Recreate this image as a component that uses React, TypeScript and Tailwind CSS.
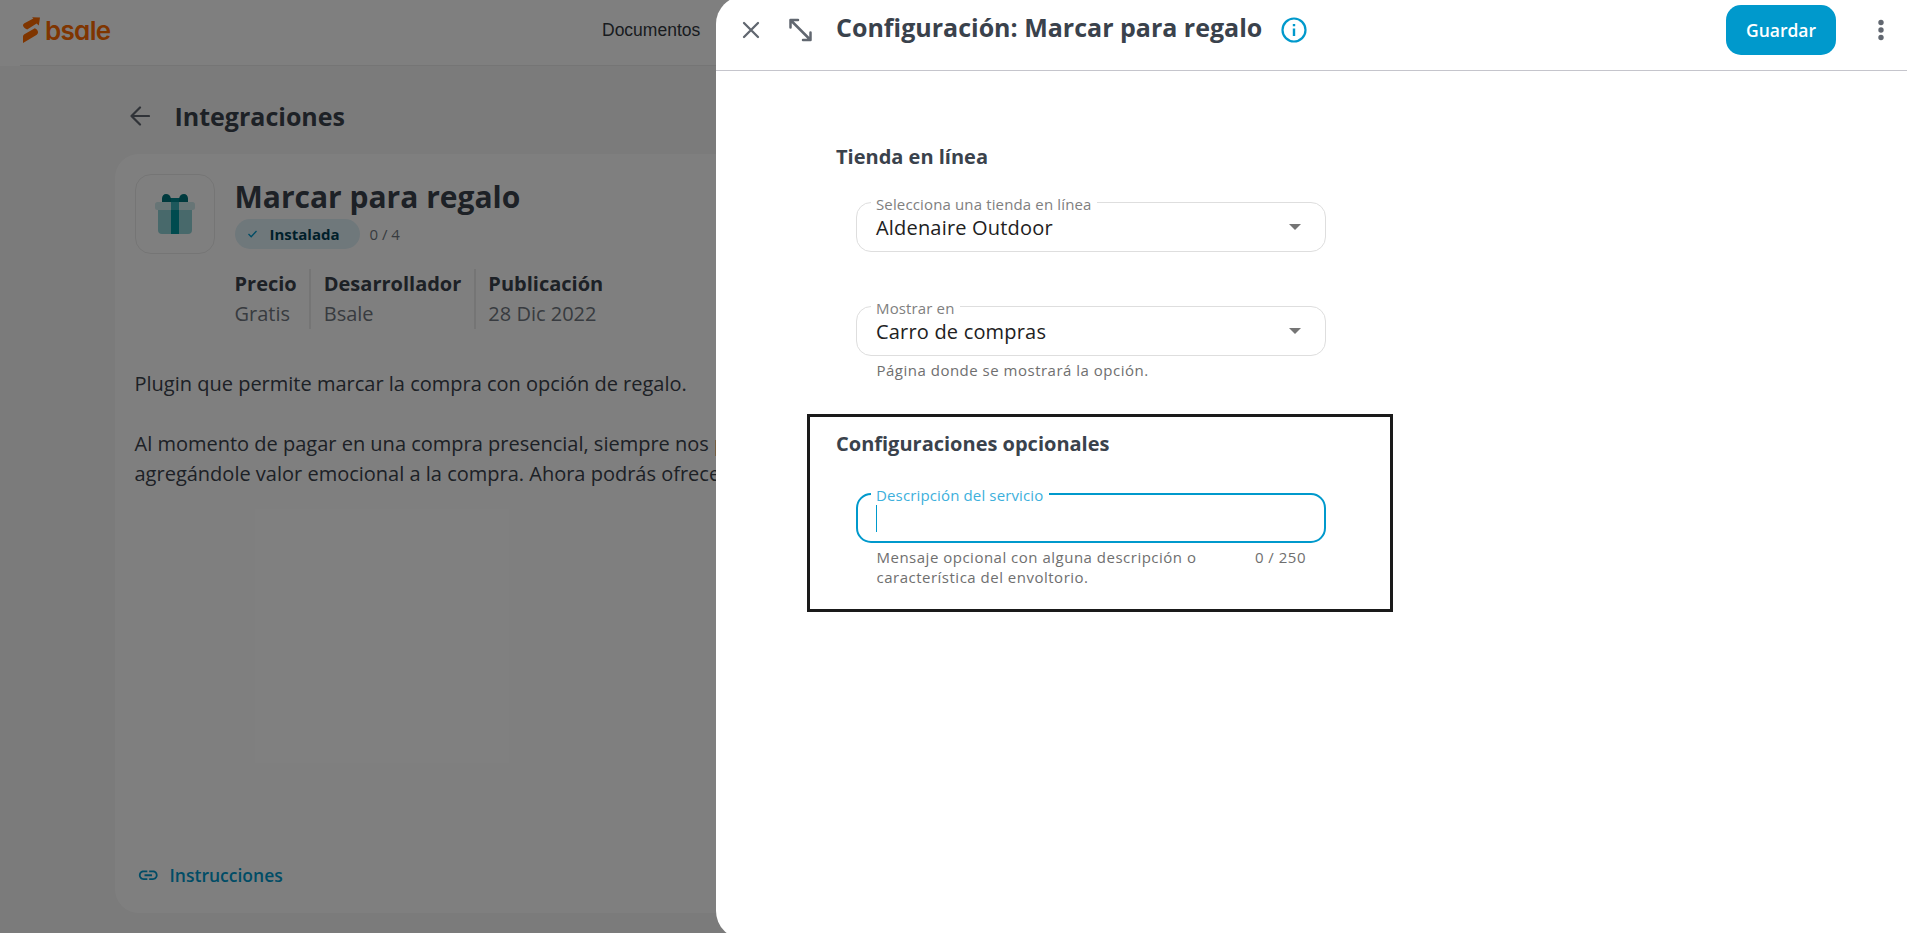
import { ReactNode } from "react";
import { MdLink } from "react-icons/md";

const details = [
  { label: "Precio", value: "Gratis" },
  { label: "Desarrollador", value: "Bsale" },
  { label: "Publicación", value: "28 Dic 2022" },
];

const Logo = () => (
  <div className="flex w-[89px] items-start">
    <svg width="19" height="28" viewBox="0 0 19 28" fill="#ff6a00" className="mt-[16px]">
      <path d="M10 1.2 18 1.6 16.8 9.4 14.6 7.6 5.2 13.6C3.2 12.6 1 10.6 1 9.4 1 8.6 1.6 7.8 2.4 7.2L11.4 2.4Z" />
      <path d="M12.8 12.2C14.8 13.2 16.2 14.8 16 16.4 16 17.6 15 18.6 14 19.2L1 27V20.6C1 19.6 1.6 18.8 2.4 18.2Z" />
    </svg>
    <span className="mt-[15px] ml-[4px] font-['Inter'] text-[26px] leading-[32px] font-semibold tracking-[-0.7px] text-[#ff6a00] [font-feature-settings:'cv11']">
      bsale
    </span>
  </div>
);

const GiftIcon = () => (
  <svg width="40" height="40" viewBox="0 0 40 40">
    <path
      d="M7 8V4.500C7 2 8.800 0 11 0c2.600 0 4.200 1.600 4.800 4h8.400C24.800 1.600 26.400 0 29 0c2.200 0 4 2 4 4.500V8Z"
      fill="#00747c"
    />
    <path d="M3 16H37V36a4 4 0 0 1-4 4H7a4 4 0 0 1-4-4Z" fill="#90d2d6" />
    <rect x="0" y="8" width="40" height="8" rx="2.500" fill="#cfeaec" />
    <rect x="16" y="16" width="8" height="24" fill="#00969f" />
    <rect x="16" y="4" width="8" height="4" fill="#00868f" />
    <rect x="16" y="8" width="8" height="8" fill="#3cb0b8" />
  </svg>
);

type FieldProps = {
  label: string;
  focused?: boolean;
  children?: ReactNode;
};

const Field = ({ label, focused, children }: FieldProps) => (
  <div
    className={
      focused
        ? "relative h-[50px] w-[470px] rounded-[15px] border-2 border-[#0099cc] pt-2.5 pr-6 pl-[18px]"
        : "relative flex h-[50px] w-[470px] items-start justify-between rounded-[15px] border border-[#dedede] pt-2.5 pr-6 pl-[19px]"
    }
  >
    <label
      className={
        focused
          ? "absolute -top-2.5 left-[13px] bg-white pr-[6px] pl-[5px] text-[15px] leading-5 tracking-[0.14px] text-[#3db0dc]"
          : "absolute -top-[9px] left-[14px] bg-white px-[5px] text-[15px] leading-5 tracking-[0.14px] text-[#808080]"
      }
    >
      {label}
    </label>
    {children}
  </div>
);

const SelectValue = ({ value }: { value: string }) => (
  <>
    <span className="text-xl leading-[30px] tracking-[0.1875px] text-[#212121]">{value}</span>
    <svg width="12" height="6" viewBox="0 0 12 6" className="mt-[11px]">
      <path d="M0 0H12L6 6Z" fill="#757575" />
    </svg>
  </>
);

const IntegrationPage = () => (
  <div className="flex h-full flex-col bg-[#f6f6f6]">
    {/* Top bar */}
    <header className="h-[66px] shrink-0 bg-white pl-5">
      <div className="flex h-full items-start border-b border-[#ebebeb] pl-[2px]">
        <Logo />
        <nav className="mt-5 ml-[491px] font-['Liberation_Sans'] text-[17.5px] leading-5 text-[#33383e]">
          Documentos
        </nav>
      </div>
    </header>

    <main className="flex flex-1 flex-col pl-[115px]">
      <div className="mt-[33px] flex h-[34px] items-center">
        <svg
          width="20"
          height="20"
          viewBox="0 0 20 20"
          fill="none"
          stroke="#616770"
          strokeWidth="2.200"
          strokeLinecap="round"
          strokeLinejoin="round"
          className="ml-[15px]"
        >
          <path d="M19 10H1.500M10 1.500 1.500 10 10 18.500" />
        </svg>
        <h2 className="ml-[24.5px] text-[25px] leading-[34px] font-bold">Integraciones</h2>
      </div>

      {/* Integration card */}
      <section className="mt-[21px] flex h-[759px] flex-col rounded-l-3xl bg-white pt-5 pl-5">
        <div className="flex gap-5">
          <div className="flex h-20 w-20 items-center justify-center rounded-2xl border border-[#ebebeb]">
            <GiftIcon />
          </div>
          <div>
            <h1 className="mt-[2px] -ml-[0.5px] text-[30px] leading-[41px] font-bold">
              Marcar para regalo
            </h1>
            <div className="mt-[2px] flex h-[30px] items-center text-[15px] leading-[30px]">
              <span className="flex h-[30px] w-[125px] items-center rounded-full bg-[#dff0f6] pl-[13px] font-bold text-[#003f54]">
                <svg
                  width="9"
                  height="8"
                  viewBox="0 0 9 8"
                  fill="none"
                  stroke="#0099cc"
                  strokeWidth="1.300"
                  className="mr-[12.5px]"
                >
                  <path d="M.5 4 3.200 6.800 8.500 1" />
                </svg>
                Instalada
              </span>
              <span className="ml-[9.5px] text-[#707780]">0 / 4</span>
            </div>
            <dl className="mt-5 -ml-[0.5px] flex divide-x-2 divide-[#ebebeb] text-xl leading-[30px]">
              {details.map((item) => (
                <div key={item.label} className="px-[12.5px] first:pl-0">
                  <dt className="font-bold">{item.label}</dt>
                  <dd className="text-[#707780]">{item.value}</dd>
                </div>
              ))}
            </dl>
          </div>
        </div>

        <div className="mt-10 -ml-[0.5px] flex flex-col gap-[30px] text-xl leading-[30px] whitespace-nowrap">
          <p>Plugin que permite marcar la compra con opción de regalo.</p>
          <p>
            Al momento de pagar en una compra presencial, siempre nos p
            <br />
            agregándole valor emocional a la compra. Ahora podrás ofrece
          </p>
        </div>

        <a
          href="#"
          className="mt-auto mb-[26px] ml-[2px] flex h-6 items-center gap-[10px] text-[17.5px] leading-6 font-semibold text-[#0099cc]"
        >
          <MdLink size={22.5} />
          Instrucciones
        </a>
      </section>
    </main>
  </div>
);

const DrawerHeader = () => (
  <header className="flex h-[75px] items-center border-b border-[#c5c5cc] pb-[6px] pl-[26px]">
    <svg
      width="18"
      height="18"
      viewBox="0 0 18 18"
      fill="none"
      stroke="#616770"
      strokeWidth="2.300"
      strokeLinecap="round"
    >
      <path d="M2 2 16 16M16 2 2 16" />
    </svg>
    <svg
      width="25"
      height="24"
      viewBox="0 0 25 24"
      fill="none"
      stroke="#616770"
      strokeWidth="2.500"
      strokeLinecap="round"
      strokeLinejoin="round"
      className="ml-[28px]"
    >
      <path d="M2.500 2 22.500 22M10 2H2.500V9.500M15 22H22.500V14.500" />
    </svg>
    <h2 className="-mt-[7px] ml-[23px] text-[25px] leading-[34px] font-bold">
      Configuración: Marcar para regalo
    </h2>
    <svg
      width="26"
      height="26"
      viewBox="0 0 26 26"
      fill="none"
      stroke="#0099cc"
      strokeWidth="2.200"
      className="ml-[19px]"
    >
      <circle cx="13" cy="13" r="11.500" />
      <path d="M13 11.500V19M13 7V9.300" strokeWidth="2.400" />
    </svg>
    <button className="ml-auto h-[50px] w-[110px] rounded-[15px] bg-[#0099cc] pt-px text-[17.5px] font-semibold text-white">
      Guardar
    </button>
    <svg width="6" height="22" viewBox="0 0 6 22" fill="#616770" className="mr-[23px] ml-[42px]">
      <circle cx="3" cy="3.500" r="2.700" />
      <circle cx="3" cy="11" r="2.700" />
      <circle cx="3" cy="18.500" r="2.700" />
    </svg>
  </header>
);

const App = () => {
  return (
    <div className="relative h-[933px] w-full overflow-hidden font-['Open_Sans',sans-serif] text-[#3a424c]">
      <IntegrationPage />

      {/* Backdrop + drawer */}
      <div className="absolute inset-0 bg-black/50" />
      <aside className="absolute -top-1 right-0 left-[716px] h-[943px] rounded-l-[28px] bg-white">
        <DrawerHeader />

        <div className="pt-[71px] pl-[120px]">
          <h3 className="text-xl leading-[30px] font-bold">Tienda en línea</h3>
          <div className="mt-[30px] ml-5">
            <Field label="Selecciona una tienda en línea">
              <SelectValue value="Aldenaire Outdoor" />
            </Field>
          </div>
          <div className="mt-[54px] ml-5">
            <Field label="Mostrar en">
              <SelectValue value="Carro de compras" />
            </Field>
            <p className="mt-1 pl-[20.5px] text-[15px] leading-5 tracking-[0.5px] text-[#6f6f6f]">
              Página donde se mostrará la opción.
            </p>
          </div>

          {/* Highlighted optional settings */}
          <div className="mt-[34px] -ml-[29px] h-[198px] w-[586px] border-[3px] border-[#1a1a1a] pt-3 pl-[26px]">
            <h3 className="text-xl leading-[30px] font-bold">Configuraciones opcionales</h3>
            <div className="mt-[34px] ml-5 w-[470px]">
              <Field label="Descripción del servicio" focused>
                <div className="h-[27px] w-px bg-[#0099cc]" />
              </Field>
              <div className="mt-1 flex items-start justify-between pr-5 pl-[20.5px] text-[15px] leading-5 tracking-[0.5px] text-[#6f6f6f]">
                <p className="w-[340px]">
                  Mensaje opcional con alguna descripción o característica del envoltorio.
                </p>
                <span>0 / 250</span>
              </div>
            </div>
          </div>
        </div>
      </aside>
    </div>
  );
};

export default App;
